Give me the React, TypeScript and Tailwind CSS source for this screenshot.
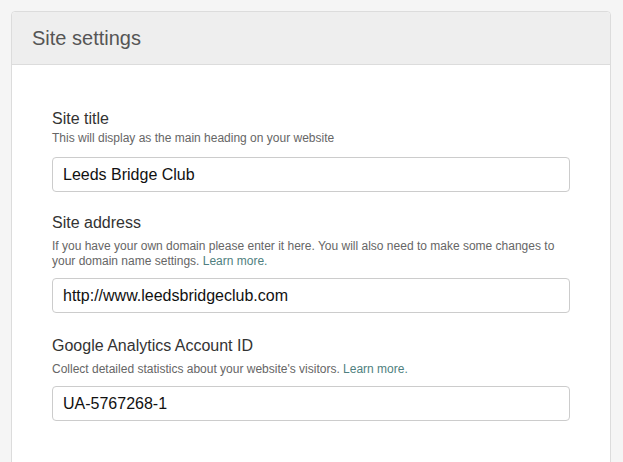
import React from 'react';

interface FieldProps {
  label: string;
  help: React.ReactNode;
  value: string;
  first?: boolean;
}

const Field: React.FC<FieldProps> = ({ label, help, value, first }) => (
  <div className={first ? 'mb-[20px]' : 'mb-[22px]'}>
    <label className="block text-[16px] leading-[22px] text-[#333]">{label}</label>
    <p className={`${first ? 'mt-[1px]' : 'mt-[5px]'} text-[12px] leading-[15px] text-[#666]`}>{help}</p>
    <input
      type="text"
      defaultValue={value}
      className={`${first ? 'mt-[11px]' : 'mt-[9px]'} block w-full h-[35px] px-[10px] rounded-[4px] border border-[#ccc] bg-white text-[16px] text-[#111] outline-none`}
    />
  </div>
);

const LearnMore = () => <a href="#" className="text-[#4f7f80]">Learn more.</a>;

export default function App() {
  return (
    <div className="min-h-[462px] bg-[#f5f5f5] pt-[11px] pl-[11px] pr-[12px] font-['Liberation_Sans',Arial,sans-serif]">
      <div className="rounded-t-[4px] border border-[#dcdcdc] bg-white min-h-[460px]">
        <div className="h-[53px] flex items-center pl-[20px] bg-[#eeeeee] border-b border-[#dcdcdc] rounded-t-[4px]">
          <h1 className="text-[20px] text-[#555]">Site settings</h1>
        </div>
        <div className="px-[40px] pt-[43px]">
          <Field
            first
            label="Site title"
            help="This will display as the main heading on your website"
            value="Leeds Bridge Club"
          />
          <Field
            label="Site address"
            help={<>If you have your own domain please enter it here. You will also need to make some changes to your domain name settings. <LearnMore /></>}
            value="http://www.leedsbridgeclub.com"
          />
          <Field
            label="Google Analytics Account ID"
            help={<>Collect detailed statistics about your website's visitors. <LearnMore /></>}
            value="UA-5767268-1"
          />
        </div>
      </div>
    </div>
  );
}
